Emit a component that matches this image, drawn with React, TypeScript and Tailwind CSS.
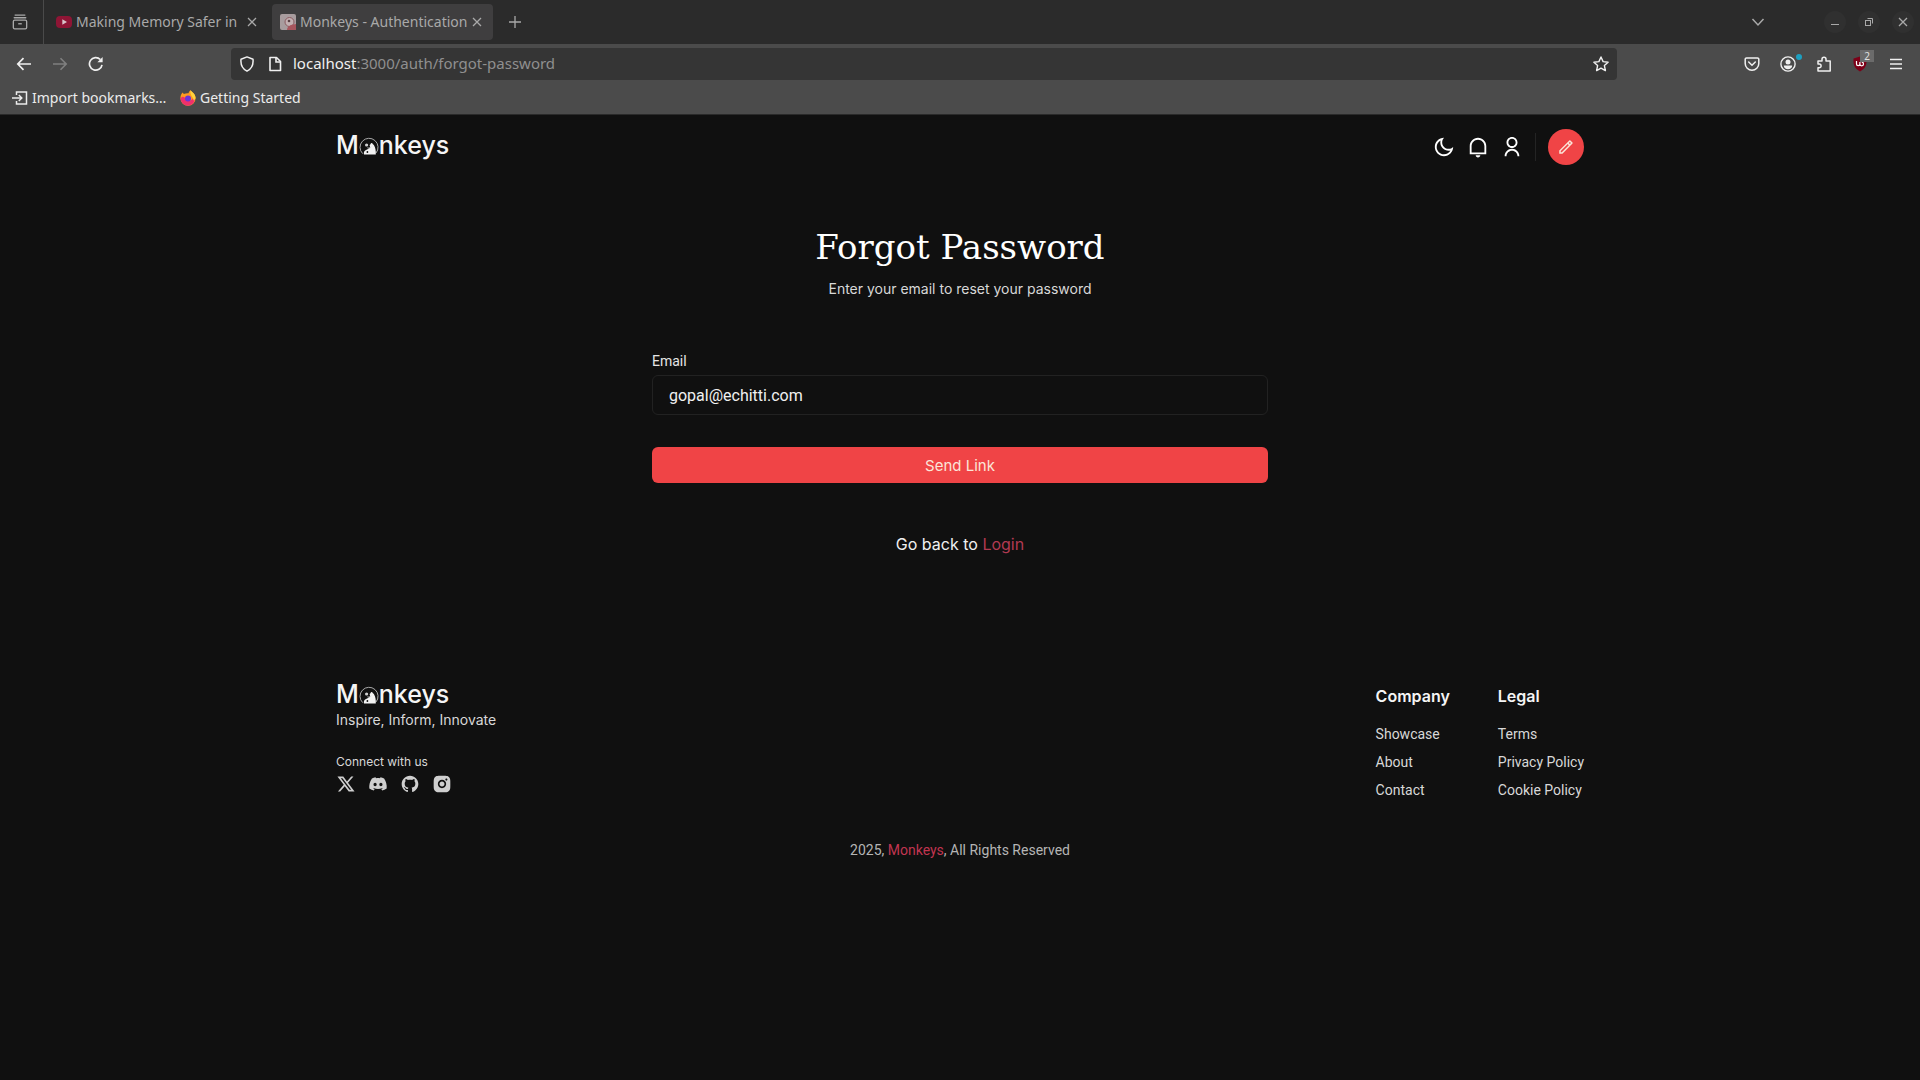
import type { ReactNode } from "react";
import {
  RiMoonLine,
  RiNotificationLine,
  RiUserLine,
  RiPencilLine,
  RiTwitterXLine,
  RiDiscordFill,
  RiGithubFill,
  RiInstagramFill,
} from "react-icons/ri";

function MonkeyMark({ className }: { className: string }) {
  return (
    <svg viewBox="0 0 20 20" className={className} aria-hidden="true">
      <path d="M3.6 16.6A9 9 0 1 1 17 16" fill="none" stroke="#a8a8a8" strokeWidth="1" />
      <path
        d="M5 17.5c-.6-2 .2-3.600 2-4.500l3-1.500c1.500-.8 1.200-2 .6-3 .5-1.800 3.400-2 4.400-.2 1.500 2.500 2 6 1.800 9.200Z"
        fill="#f2f2f2"
      />
      <circle cx="7.600" cy="8" r="1.600" fill="#cfcfcf" />
      <path d="M8.500 10.800c1.300.6 2.800.2 3.600-1" stroke="#cfcfcf" strokeWidth="1" fill="none" />
      <circle cx="12.600" cy="7" r="1" fill="#f2f2f2" />
      <circle cx="8.400" cy="15" r=".9" fill="#101010" />
    </svg>
  );
}

function Logo() {
  return (
    <a
      href="#home"
      aria-label="Monkeys"
      className="flex items-baseline font-['Inter',sans-serif] text-[25px] leading-8 font-medium text-[#f5f5f5]"
    >
      <span>M</span>
      <MonkeyMark className="mt-1 h-5 w-5 self-center" />
      <span>nkeys</span>
    </a>
  );
}

function IconButton({ label, className = "", children }: { label: string; className?: string; children: ReactNode }) {
  return (
    <button type="button" aria-label={label} className={`flex items-center justify-center ${className}`}>
      {children}
    </button>
  );
}

function Cross({ className }: { className: string }) {
  return (
    <svg viewBox="0 0 12 12" className={className} fill="none" stroke="currentColor" strokeWidth="1.300" aria-hidden="true">
      <path d="M2 2l8 8M10 2l-8 8" />
    </svg>
  );
}

function TabStrip() {
  return (
    <div className="flex h-11 items-center bg-[#2b2b2b] text-[#a9a9a9]">
      <IconButton label="Recent browsing" className="h-11 w-11 border-r border-[#4a4a4a] pr-1">
        <svg viewBox="0 0 18 18" className="h-4 w-4" fill="none" stroke="currentColor" strokeWidth="1.500">
          <path d="M3.500 1.200h11M2.500 4.200h13" strokeLinecap="round" />
          <rect x="1.500" y="6.800" width="15" height="10" rx="1.500" />
          <path d="M7 11h4" />
        </svg>
      </IconButton>
      <div className="flex h-9 w-[228px] items-center pl-3">
        <svg viewBox="0 0 16 16" className="h-4 w-4 shrink-0" aria-hidden="true">
          <rect x="0" y="2" width="16" height="12" rx="4" fill="#8e1535" />
          <path d="M6.300 5.300v5.400L11 8z" fill="#d8c4ca" />
        </svg>
        <span className="flex-1 pl-1 text-[14px] leading-5 whitespace-nowrap">Making Memory Safer in</span>
        <IconButton label="Close tab Making Memory Safer in" className="mr-3 h-4 w-4 shrink-0">
          <Cross className="h-3 w-3" />
        </IconButton>
      </div>
      <div className="flex h-9 w-[221px] items-center rounded bg-[#3f3e3f] pl-2">
        <svg viewBox="0 0 16 16" className="h-4 w-4 shrink-0" aria-hidden="true">
          <rect width="16" height="16" rx="2" fill="#a89c9e" />
          <circle cx="9.500" cy="8" r="4.500" fill="#c4b0b2" stroke="#8a5a60" />
          <path d="M7 16c0-3 2-4 4-5l5-1v6z" fill="#a8555d" />
          <circle cx="9" cy="7" r="1.300" fill="#5e4448" />
        </svg>
        <span className="flex-1 pl-1 text-[14px] leading-5 whitespace-nowrap">Monkeys - Authentication</span>
        <IconButton label="Close tab Monkeys - Authentication" className="mr-2 h-4 w-4 shrink-0">
          <Cross className="h-3 w-3" />
        </IconButton>
      </div>
      <IconButton label="New tab" className="ml-3 h-5 w-5">
        <svg viewBox="0 0 14 14" className="h-3.5 w-3.5" stroke="currentColor" strokeWidth="1.300">
          <path d="M7 1v12M1 7h12" />
        </svg>
      </IconButton>
      <div className="flex-1" />
      <IconButton label="List all tabs" className="mr-14 h-5 w-5">
        <svg viewBox="0 0 16 16" className="h-4 w-4" fill="none" stroke="currentColor" strokeWidth="1.500">
          <path d="M2.500 5l5.500 6 5.500-6" />
        </svg>
      </IconButton>
      <div className="flex gap-3 pr-1.5">
        <IconButton label="Minimize" className="h-[22px] w-[22px] rounded-full bg-[#303030]">
          <svg viewBox="0 0 12 12" className="h-3 w-3" stroke="currentColor" strokeWidth="1">
            <path d="M2 8.500h8" />
          </svg>
        </IconButton>
        <IconButton label="Restore" className="h-[22px] w-[22px] rounded-full bg-[#303030]">
          <svg viewBox="0 0 12 12" className="h-3 w-3" fill="none" stroke="currentColor" strokeWidth="1">
            <rect x="2.500" y="4.500" width="5" height="5" />
            <path d="M4.500 2.500h5v5" />
          </svg>
        </IconButton>
        <IconButton label="Close window" className="h-[22px] w-[22px] rounded-full bg-[#303030]">
          <Cross className="h-3 w-3" />
        </IconButton>
      </div>
    </div>
  );
}

function Toolbar() {
  return (
    <div className="flex h-10 items-center text-[#f0f0f0]">
      <div className="flex w-[231px] items-center gap-4 pl-3.5">
        <IconButton label="Back" className="h-5 w-5">
          <svg viewBox="0 0 16 16" className="h-4 w-4" fill="none" stroke="currentColor" strokeWidth="1.700">
            <path d="M15 8H2M7.500 2.200L1.800 8l5.700 5.800" />
          </svg>
        </IconButton>
        <IconButton label="Forward" className="h-5 w-5 text-[#808080]">
          <svg viewBox="0 0 16 16" className="h-4 w-4" fill="none" stroke="currentColor" strokeWidth="1.600">
            <path d="M1 8h13M8.500 2.200L14.200 8l-5.700 5.800" />
          </svg>
        </IconButton>
        <IconButton label="Reload" className="h-5 w-5">
          <svg viewBox="0 0 16 16" className="h-4 w-4" fill="none" stroke="currentColor" strokeWidth="1.700">
            <path d="M14 8.800A6.300 6.300 0 1 1 12.300 3.500" />
            <path d="M14.600 1v5.200H9.400z" fill="currentColor" stroke="none" />
          </svg>
        </IconButton>
      </div>
      <div className="flex h-8 flex-1 items-center rounded bg-[#353535] px-2">
        <svg viewBox="0 0 16 16" className="h-4 w-4" fill="none" stroke="currentColor" strokeWidth="1.500" aria-hidden="true">
          <path d="M8 .9l6 2.300c.5 5-1.500 9.800-6 12-4.500-2.200-6.500-7-6-12z" strokeLinejoin="round" />
        </svg>
        <svg viewBox="0 0 16 16" className="ml-3 h-4 w-4" fill="none" stroke="currentColor" strokeWidth="1.600" aria-hidden="true">
          <path d="M3 1.500h6.500L13.500 5.500v9H3z" strokeLinejoin="round" />
          <path d="M9 1.500V6h4.500" />
        </svg>
        <a href="#address" className="ml-2.5 flex-1 pb-0.5 text-[15px] leading-5 whitespace-nowrap text-[#8f8f8f]">
          <span className="text-[#f0f0f0]">localhost</span>:3000/auth/forgot-password
        </a>
        <IconButton label="Bookmark this page" className="h-4 w-4">
          <svg viewBox="0 0 16 16" className="h-4 w-4" fill="none" stroke="currentColor" strokeWidth="1.400" strokeLinejoin="round">
            <path d="M8 1l2.100 4.600 5 .6-3.700 3.400 1 5L8 12.100l-4.400 2.500 1-5L.900 6.200l5-.6z" />
          </svg>
        </IconButton>
      </div>
      <div className="flex w-[303px] items-center justify-end gap-4 pr-3.5">
        <IconButton label="Save to Pocket" className="h-5 w-5">
          <svg viewBox="0 0 16 16" className="h-4 w-4" fill="none" stroke="currentColor" strokeWidth="1.500">
            <path d="M2.500 2h11a1.300 1.300 0 0 1 1.300 1.300V7.500a6.800 6.800 0 0 1-13.600 0V3.300A1.300 1.300 0 0 1 2.500 2z" />
            <path d="M4.700 6L8 9.200 11.300 6" strokeLinecap="round" />
          </svg>
        </IconButton>
        <IconButton label="Account" className="relative h-5 w-5">
          <svg viewBox="0 0 16 16" className="h-4 w-4">
            <circle cx="8" cy="8" r="7.100" fill="none" stroke="currentColor" strokeWidth="1.400" />
            <circle cx="8" cy="6" r="2.500" fill="currentColor" />
            <path d="M3.800 9.500h8.400c0 2.600-2 3.700-4.200 3.700s-4.200-1.100-4.200-3.700z" fill="currentColor" />
          </svg>
          <span className="absolute top-0 -right-1 h-1.5 w-1.5 rounded-full bg-[#1d9fc0]" />
        </IconButton>
        <IconButton label="Extensions" className="h-5 w-5">
          <svg viewBox="0 0 16 16" className="h-4 w-4" fill="none" stroke="currentColor" strokeWidth="1.500" strokeLinejoin="round">
            <path d="M2 5h4V3.200a2 2 0 0 1 4 0V5h4.200v10H2v-3.200h1.200a1.900 1.900 0 0 0 0-3.800H2z" />
          </svg>
        </IconButton>
        <IconButton label="uBlock Origin" className="relative h-5 w-5">
          <svg viewBox="0 0 16 16" className="h-4 w-4">
            <path d="M8 .5l6.500 2c.5 6-1 10-6.500 13C2.500 12.500 1 8.500 1.500 2.500z" fill="#7d0018" />
            <path d="M4.500 5v3a1.700 1.700 0 0 0 3.400 0V6v2a1.800 1.800 0 1 0 1.800-1.800" fill="none" stroke="#fff" strokeWidth="1.200" />
          </svg>
          <span className="absolute -top-1 -right-1 h-3 w-3.5 bg-[#6b6b6b] text-center text-[10px] leading-3 text-[#e0e0e0]">2</span>
        </IconButton>
        <IconButton label="Menu" className="h-5 w-5">
          <svg viewBox="0 0 16 16" className="h-4 w-4" stroke="currentColor" strokeWidth="1.500">
            <path d="M2 3.500h12M2 8h12M2 12.500h12" />
          </svg>
        </IconButton>
      </div>
    </div>
  );
}

function BookmarksBar() {
  return (
    <div className="flex h-[30px] items-center gap-3 pb-0.5 pl-3 text-[14px] leading-5 text-[#ececec]">
      <a href="#import" className="flex w-[156px] items-center gap-1 whitespace-nowrap">
        <svg viewBox="0 0 16 16" className="h-4 w-4 shrink-0" fill="none" stroke="currentColor" strokeWidth="1.500" aria-hidden="true">
          <path d="M4.500 5V2h10v12h-10v-3M0 8h9.500M6.800 5l3 3-3 3" />
        </svg>
        Import bookmarks…
      </a>
      <a href="#getting-started" className="flex items-center gap-1 whitespace-nowrap">
        <svg viewBox="0 0 16 16" className="h-4 w-4 shrink-0" aria-hidden="true">
          <path d="M2.500 2.500c.6.500 1 1 1.300 1.500C5.500 3.400 7 3 8.500 3.300 9 2 9.500 1 10.500.3c1 1.500 4.900 3.200 5.100 7.700A7.600 7.600 0 0 1 .4 8.300C.4 6 1.200 4 2.500 2.500z" fill="#ff9a1f" />
          <path d="M.5 8.500C2 6 4 6.500 6 9c2 3 6 2 8-2 2 5-2 8.700-6 8.700S.8 12.500.5 8.500z" fill="#f0306c" />
          <circle cx="8" cy="8.500" r="3" fill="#6a34d8" />
          <path d="M10.500.3c1 1.500 4.900 3.200 5.100 7.700-.6 1.500-1.300 2-2 2.500C13.500 7 9.500 5.500 10.500.3z" fill="#ffd23c" />
        </svg>
        Getting Started
      </a>
    </div>
  );
}

function SiteHeader() {
  return (
    <header className="mx-auto flex h-16 w-full max-w-[1280px] items-center justify-between px-4">
      <div className="pb-1">
        <Logo />
      </div>
      <div className="flex items-center text-white">
        <div className="flex items-center gap-3 pr-3">
          <IconButton label="Toggle theme" className="h-[22px] w-[22px]">
            <RiMoonLine className="h-[22px] w-[22px]" />
          </IconButton>
          <IconButton label="Notifications" className="h-[22px] w-[22px]">
            <RiNotificationLine className="h-[22px] w-[22px]" />
          </IconButton>
          <IconButton label="Profile" className="h-[22px] w-[22px]">
            <RiUserLine className="h-[22px] w-[22px]" />
          </IconButton>
        </div>
        <div className="h-7 border-l border-[#242424]" />
        <IconButton label="Write" className="ml-3 h-9 w-9 rounded-full bg-[#f04446] text-[#fbe5d8]">
          <RiPencilLine className="h-[18px] w-[18px]" />
        </IconButton>
      </div>
    </header>
  );
}

function ForgotPassword() {
  return (
    <main className="mx-auto flex w-full max-w-[648px] flex-col px-4 pt-11 text-center font-['Inter',sans-serif]">
      <h1 className="font-['DejaVu_Serif',serif] text-[34px] leading-12 text-white">Forgot Password</h1>
      <p className="mt-2 text-[14px] leading-5 text-[#d8d8d8]">Enter your email to reset your password</p>
      <form className="mt-12 flex flex-col" onSubmit={(e) => e.preventDefault()}>
        <label htmlFor="email" className="self-start pt-0.5 font-['Roboto',sans-serif] text-[14px] leading-6 text-[#e5e5e5]">
          Email
        </label>
        <input
          id="email"
          type="email"
          defaultValue="gopal@echitti.com"
          className="mt-0.5 h-10 rounded-md border border-[#222] bg-transparent px-4 font-['Roboto',sans-serif] text-[16px] text-[#f0f0f0] outline-none"
        />
        <button type="submit" className="mt-8 h-9 rounded-md bg-[#f04446] pt-0.5 text-[15px] text-[#fbe5d8]">
          Send Link
        </button>
      </form>
      <p className="mt-[49px] text-[16px] leading-6 text-[#f0f0f0]">
        Go back to{" "}
        <a href="#login" className="text-[#b23a52]">
          Login
        </a>
      </p>
    </main>
  );
}

const linkGroups = [
  { title: "Company", links: ["Showcase", "About", "Contact"] },
  { title: "Legal", links: ["Terms", "Privacy Policy", "Cookie Policy"] },
];

function SiteFooter() {
  return (
    <footer className="mx-auto mt-[122px] w-full max-w-[1280px] px-4 text-[#d8d8d8]">
      <div className="flex justify-between">
        <div className="font-['Inter',sans-serif]">
          <Logo />
          <p className="text-[14px] leading-5">Inspire, Inform, Innovate</p>
          <p className="mt-6 text-[12px] leading-4">Connect with us</p>
          <div className="mt-1 flex gap-3 text-[#cfcfcf]">
            <a href="#x" aria-label="X">
              <RiTwitterXLine className="h-5 w-5" />
            </a>
            <a href="#discord" aria-label="Discord">
              <RiDiscordFill className="h-5 w-5" />
            </a>
            <a href="#github" aria-label="GitHub">
              <RiGithubFill className="h-5 w-5" />
            </a>
            <a href="#instagram" aria-label="Instagram">
              <RiInstagramFill className="h-5 w-5" />
            </a>
          </div>
        </div>
        <div className="flex gap-12 pt-1.5">
          {linkGroups.map((group) => (
            <nav key={group.title} aria-label={group.title}>
              <h2 className="font-['Inter',sans-serif] text-[16px] leading-6 font-semibold text-[#f5f5f5]">{group.title}</h2>
              <ul className="mt-4 flex flex-col gap-2 font-['Roboto',sans-serif] text-[14px] leading-5">
                {group.links.map((link) => (
                  <li key={link}>
                    <a href="#footer">{link}</a>
                  </li>
                ))}
              </ul>
            </nav>
          ))}
        </div>
      </div>
      <p className="mt-10 text-center font-['Roboto',sans-serif] text-[14px] leading-5 text-[#b5b5b5]">
        2025,{" "}
        <a href="#home" className="text-[#c23550]">
          Monkeys
        </a>
        , All Rights Reserved
      </p>
    </footer>
  );
}

export default function App() {
  return (
    <div className="flex min-h-screen flex-col bg-[#101010]">
      <div className="border-b border-[#2a2a2a] bg-[#4b4b4b] font-['Noto_Sans',sans-serif]">
        <TabStrip />
        <Toolbar />
        <BookmarksBar />
      </div>
      <SiteHeader />
      <ForgotPassword />
      <SiteFooter />
    </div>
  );
}
